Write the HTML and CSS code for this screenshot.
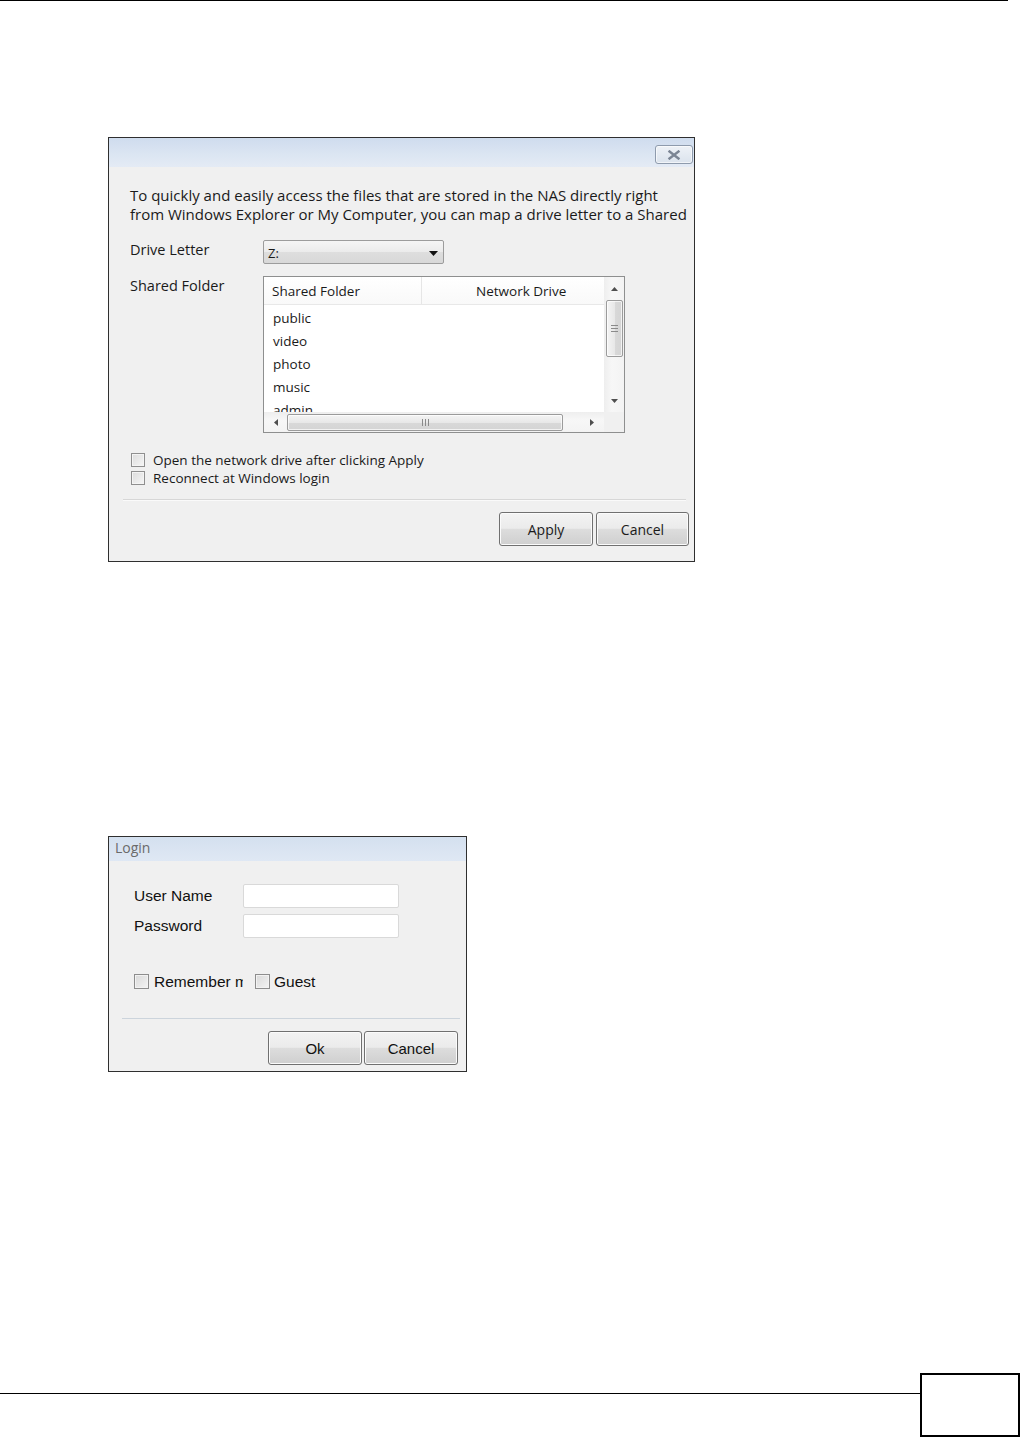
FILE: index.html
```html
<!DOCTYPE html>
<html>
<head>
<meta charset="utf-8">
<link rel="stylesheet" href="styles.css">
</head>
<body>
<div class="page">
  <div class="top-rule"></div>

  <div class="dlg dlg-map">
    <div class="titlebar tb-map">
      <div class="close-btn">
        <svg width="14" height="10" viewBox="0 0 14 10"><path d="M2.5 1.5 L11.5 8.5 M11.5 1.5 L2.5 8.5" stroke="#7b8594" stroke-width="2.4" stroke-linecap="square" fill="none"/></svg>
      </div>
    </div>
    <div class="map-body">
      <p class="intro">To quickly and easily access the files that are stored in the NAS directly right<br>from Windows Explorer or My Computer, you can map a drive letter to a Shared</p>

      <div class="drive-row">
        <span class="lbl">Drive Letter</span>
        <div class="combo">
          <span class="combo-val">Z:</span>
          <svg class="combo-arrow" width="9" height="5" viewBox="0 0 9 5"><path d="M0 0 H9 L4.5 5 Z" fill="#111"/></svg>
        </div>
      </div>

      <div class="shared-row">
        <span class="lbl">Shared Folder</span>
        <div class="listbox">
          <div class="list-content">
            <div class="list-head">
              <span class="col col-folder">Shared Folder</span>
              <span class="col col-drive">Network Drive</span>
            </div>
            <div class="list-rows">
              <div class="list-row">public</div>
              <div class="list-row">video</div>
              <div class="list-row">photo</div>
              <div class="list-row">music</div>
              <div class="list-row">admin</div>
            </div>
          </div>
          <div class="vscroll">
            <div class="sarrow sarrow-up"><svg width="7" height="4" viewBox="0 0 7 4"><path d="M0 4 H7 L3.5 0 Z" fill="#4f4f4f"/></svg></div>
            <div class="vthumb">
              <svg width="7" height="7" viewBox="0 0 7 7"><path d="M0 0.5 H7 M0 3.5 H7 M0 6.5 H7" stroke="#8a8a8a" stroke-width="1"/></svg>
            </div>
            <div class="vspace"></div>
            <div class="sarrow sarrow-down"><svg width="7" height="4" viewBox="0 0 7 4"><path d="M0 0 H7 L3.5 4 Z" fill="#4f4f4f"/></svg></div>
          </div>
          <div class="hscroll">
            <div class="harrow harrow-left"><svg width="4" height="7" viewBox="0 0 4 7"><path d="M4 0 V7 L0 3.5 Z" fill="#4f4f4f"/></svg></div>
            <div class="hthumb">
              <svg width="7" height="7" viewBox="0 0 7 7"><path d="M0.5 0 V7 M3.5 0 V7 M6.5 0 V7" stroke="#8a8a8a" stroke-width="1"/></svg>
            </div>
            <div class="hspace"></div>
            <div class="harrow harrow-right"><svg width="4" height="7" viewBox="0 0 4 7"><path d="M0 0 V7 L4 3.5 Z" fill="#4f4f4f"/></svg></div>
          </div>
          <div class="corner"></div>
        </div>
      </div>

      <div class="checks">
        <label class="chk-row"><span class="chk"></span><span>Open the network drive after clicking Apply</span></label>
        <label class="chk-row"><span class="chk"></span><span>Reconnect at Windows login</span></label>
      </div>

      <div class="sep sep-map"></div>

      <div class="btn-row btn-row-map">
        <button class="btn btn-apply">Apply</button>
        <button class="btn btn-cancel">Cancel</button>
      </div>
    </div>
  </div>

  <div class="dlg dlg-login">
    <div class="titlebar tb-login">Login</div>
    <div class="login-body">
      <div class="form-row">
        <span class="flbl">User Name</span>
        <div class="finput"></div>
      </div>
      <div class="form-row form-row-2">
        <span class="flbl">Password</span>
        <div class="finput"></div>
      </div>
      <div class="login-checks">
        <span class="lchk"></span><span class="lchk-lbl lchk-remember">Remember me</span>
        <span class="lchk lchk-guest"></span><span class="lchk-lbl">Guest</span>
      </div>
      <div class="sep sep-login"></div>
      <div class="btn-row btn-row-login">
        <button class="btn btn-ok">Ok</button>
        <button class="btn btn-lcancel">Cancel</button>
      </div>
    </div>
  </div>

  <div class="footer">
    <div class="footer-line"></div>
    <div class="page-box"></div>
  </div>
</div>
</body>
</html>
```

FILE: styles.css
```css
* { box-sizing: border-box; }
body { margin: 0; background: #fff; }
.page {
  width: 1020px;
  height: 1438px;
  display: flex;
  flex-direction: column;
  overflow: hidden;
}
.top-rule { width: 1008px; height: 1px; background: #000; flex: none; }

.dlg { background: #f0f0f0; border: 1px solid #2f2f2f; flex: none; }

/* ---------- map drive dialog ---------- */
.dlg-map {
  width: 587px;
  height: 425px;
  margin: 136px 0 0 108px;
  font-family: "Open Sans", sans-serif;
  color: #1a1a1a;
}
.titlebar { flex: none; }
.tb-map {
  height: 29px;
  background: linear-gradient(#cfdcee, #dbe5f2 55%, #e4ebf5);
  display: flex;
  justify-content: flex-end;
  align-items: flex-start;
  padding: 7px 1px 0 0;
}
.close-btn {
  width: 38px;
  height: 19px;
  border: 1px solid #8e9bad;
  border-radius: 3px;
  background: linear-gradient(#eef2f7, #dbe3ed);
  display: flex;
  align-items: center;
  justify-content: center;
  box-shadow: inset 0 0 0 1px rgba(255,255,255,0.6);
}
.map-body { padding: 19px 0 0 21px; }
.intro {
  margin: 0;
  font-size: 15px;
  line-height: 19px;
  height: 38px;
  white-space: nowrap;
}
.lbl { width: 133px; font-size: 14.5px; line-height: 19px; flex: none; }
.drive-row { display: flex; align-items: flex-start; margin-top: 16px; }
.combo {
  width: 181px;
  height: 24px;
  border: 1px solid #9c9c9c;
  border-radius: 2px;
  background: linear-gradient(#f5f5f5, #ebebeb 50%, #dedede 51%, #d8d8d8);
  display: flex;
  align-items: center;
  justify-content: space-between;
  padding: 2px 5px 0 4px;
}
.combo-val { font-size: 13px; line-height: 18px; }
.combo-arrow { display: block; }

.shared-row { display: flex; align-items: flex-start; margin-top: 12px; }
.listbox {
  width: 362px;
  height: 157px;
  border: 1px solid #8e8f8f;
  background: #fff;
  display: grid;
  grid-template-columns: 1fr 20px;
  grid-template-rows: 1fr 20px;
}
.list-content { overflow: hidden; font-size: 13.5px; }
.list-head {
  height: 28px;
  display: flex;
  border-bottom: 1px solid #e8e8e8;
  background: linear-gradient(#ffffff, #f9f9f9);
}
.col { line-height: 28px; }
.col-folder { width: 158px; padding-left: 8px; border-right: 1px solid #e6e6e6; }
.col-drive { padding-left: 54px; white-space: nowrap; }
.list-rows { padding-top: 2px; }
.list-row { line-height: 23px; padding-left: 9px; }

.vscroll {
  background: linear-gradient(to right, #eeeeee, #f7f7f7 40%, #f3f3f3);
  display: flex;
  flex-direction: column;
  align-items: center;
}
.sarrow { display: flex; align-items: center; justify-content: center; width: 100%; }
.sarrow-up { height: 23px; }
.sarrow-down { height: 22px; }
.vthumb {
  width: 17px;
  height: 57px;
  border: 1px solid #9b9b9b;
  border-radius: 2px;
  background: linear-gradient(to right, #f4f4f4, #e8e8e8 50%, #d9d9d9 51%, #d4d4d4);
  display: flex;
  align-items: center;
  justify-content: center;
  box-shadow: inset 0 0 0 1px rgba(255,255,255,0.7);
}
.vspace { flex: 1; }
.hscroll {
  background: linear-gradient(#eeeeee, #f7f7f7 40%, #f3f3f3);
  display: flex;
  align-items: center;
}
.harrow { display: flex; align-items: center; justify-content: center; height: 100%; }
.harrow-left { width: 23px; }
.harrow-right { width: 24px; }
.hthumb {
  width: 276px;
  height: 17px;
  border: 1px solid #9b9b9b;
  border-radius: 2px;
  background: linear-gradient(#f4f4f4, #e8e8e8 50%, #d9d9d9 51%, #d4d4d4);
  display: flex;
  align-items: center;
  justify-content: center;
  box-shadow: inset 0 0 0 1px rgba(255,255,255,0.7);
}
.hspace { flex: 1; }
.corner { background: #f0f0f0; }

.checks { margin-top: 18px; font-size: 13.5px; }
.chk-row { display: flex; align-items: center; height: 18px; }
.chk {
  width: 14px;
  height: 14px;
  margin-left: 1px;
  margin-right: 8px;
  border: 1px solid #8f8f8f;
  background: linear-gradient(135deg, #dcdcdc, #f6f6f6);
  box-shadow: inset 0 0 0 1px #f4f4f4;
  flex: none;
}

.sep { height: 1px; }
.sep-map {
  margin: 12px 0 0 -7px;
  width: 563px;
  background: #d7d7d7;
  box-shadow: 0 1px 0 #fafafa;
}
.btn-row { display: flex; justify-content: flex-end; }
.btn-row-map { margin-top: 12px; gap: 3px; padding-right: 5px; }
.btn {
  height: 34px;
  border: 1px solid #707070;
  border-radius: 3px;
  background: linear-gradient(#f3f3f3, #ebebeb 48%, #dddddd 50%, #cfcfcf);
  box-shadow: inset 0 0 0 1px #fbfbfb;
  font-family: "Open Sans", sans-serif;
  font-size: 14px;
  color: #1a1a1a;
  padding: 0;
}
.btn-apply { width: 94px; }
.btn-cancel { width: 93px; }

/* ---------- login dialog ---------- */
.dlg-login {
  width: 359px;
  height: 236px;
  margin: 274px 0 0 108px;
  font-family: "Liberation Sans", Arial, sans-serif;
  color: #111;
}
.tb-login {
  height: 24px;
  background: linear-gradient(#d4e0ef, #dfe8f4);
  font-family: "Open Sans", sans-serif;
  font-size: 14px;
  line-height: 22px;
  color: #6a6a6a;
  padding-left: 6px;
}
.login-body { padding: 23px 0 0 25px; }
.form-row { display: flex; align-items: center; }
.form-row-2 { margin-top: 6px; }
.flbl { width: 109px; font-size: 15.5px; }
.finput {
  width: 156px;
  height: 24px;
  border: 1px solid #d9d9d9;
  border-radius: 2px;
  background: #fff;
}
.login-checks {
  display: flex;
  align-items: center;
  margin-top: 35px;
  height: 17px;
  font-size: 15.5px;
}
.lchk {
  width: 15px;
  height: 15px;
  border: 1px solid #8d8d8d;
  background: linear-gradient(135deg, #d9d9d9, #f3f3f3);
  box-shadow: inset 0 0 0 1px #f2f2f2;
  flex: none;
}
.lchk-lbl { margin-left: 5px; white-space: nowrap; }
.lchk-remember { width: 89px; overflow: hidden; }
.lchk-guest { margin-left: 12px; }
.lchk-guest + .lchk-lbl { margin-left: 4px; }
.sep-login {
  margin: 28px 0 0 -12px;
  width: 338px;
  background: #ccd4dc;
}
.btn-row-login { margin-top: 12px; gap: 2px; padding-right: 8px; }
.btn-ok, .btn-lcancel {
  width: 94px;
  font-family: "Liberation Sans", Arial, sans-serif;
  font-size: 15px;
  color: #111;
}

/* ---------- footer ---------- */
.footer {
  margin-top: auto;
  margin-bottom: 1px;
  display: flex;
  height: 64px;
  flex: none;
}
.footer-line { flex: 1; height: 1px; background: #000; margin-top: 20px; }
.page-box { width: 100px; height: 64px; border: 2px solid #000; }
```
